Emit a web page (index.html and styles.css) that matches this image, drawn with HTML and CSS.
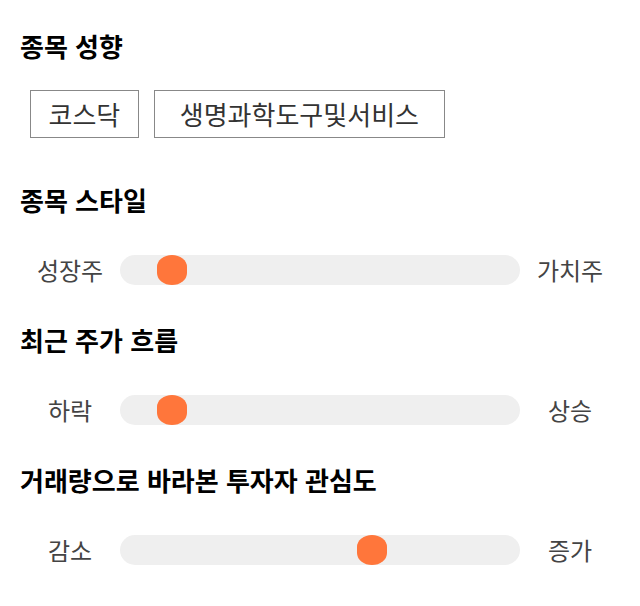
FILE: index.html
```html
<!DOCTYPE html>
<html lang="ko">
<head>
<meta charset="utf-8">
<link rel="stylesheet" href="styles.css">
</head>
<body>
<div class="page">
  <section class="sec sec-first">
    <h2 class="title">종목 성향</h2>
    <div class="chips">
      <span class="chip">코스닥</span>
      <span class="chip chip-wide">생명과학도구및서비스</span>
    </div>
  </section>
  <section class="sec">
    <h2 class="title">종목 스타일</h2>
    <div class="slider-row">
      <span class="lbl">성장주</span>
      <div class="track"><span class="thumb" style="left: calc((100% - 30px) * 0.10)"></span></div>
      <span class="lbl">가치주</span>
    </div>
  </section>
  <section class="sec">
    <h2 class="title">최근 주가 흐름</h2>
    <div class="slider-row">
      <span class="lbl">하락</span>
      <div class="track"><span class="thumb" style="left: calc((100% - 30px) * 0.10)"></span></div>
      <span class="lbl">상승</span>
    </div>
  </section>
  <section class="sec">
    <h2 class="title">거래량으로 바라본 투자자 관심도</h2>
    <div class="slider-row">
      <span class="lbl">감소</span>
      <div class="track"><span class="thumb" style="left: calc((100% - 30px) * 0.64)"></span></div>
      <span class="lbl">증가</span>
    </div>
  </section>
</div>
</body>
</html>
```
FILE: styles.css
```css
* { box-sizing: border-box; }
html, body { margin: 0; padding: 0; background: #fff; }
body {
  font-family: "Noto Sans CJK KR", "Noto Sans", sans-serif;
  color: #333;
}
.page {
  padding: 28px 20px 0 20px;
}
.title {
  margin: 0;
  font-size: 26px;
  font-weight: 700;
  color: #000;
  line-height: 36px;
}
.sec { margin-bottom: 37px; }
.sec-first { margin-bottom: 44px; }
.chips {
  display: flex;
  gap: 15px;
  margin: 26px 0 0 10px;
}
.chip {
  display: inline-flex;
  align-items: center;
  height: 48px;
  padding: 0 17.5px;
  border: 1px solid #888;
  font-size: 26px;
  line-height: 1;
  color: #333;
}
.chip-wide {
  padding: 0 25px;
}
.slider-row {
  display: grid;
  grid-template-columns: 100px 400px 100px;
  align-items: center;
  margin-top: 37px;
  height: 30px;
}
.lbl {
  text-align: center;
  font-size: 24px;
  line-height: 30px;
  color: #444;
}
.track {
  position: relative;
  height: 30px;
  background: #efefef;
  border-radius: 15px;
}
.thumb {
  position: absolute;
  top: 0;
  width: 30px;
  height: 30px;
  background: #ff763b;
  border-radius: 50% / 40%;
}
```
